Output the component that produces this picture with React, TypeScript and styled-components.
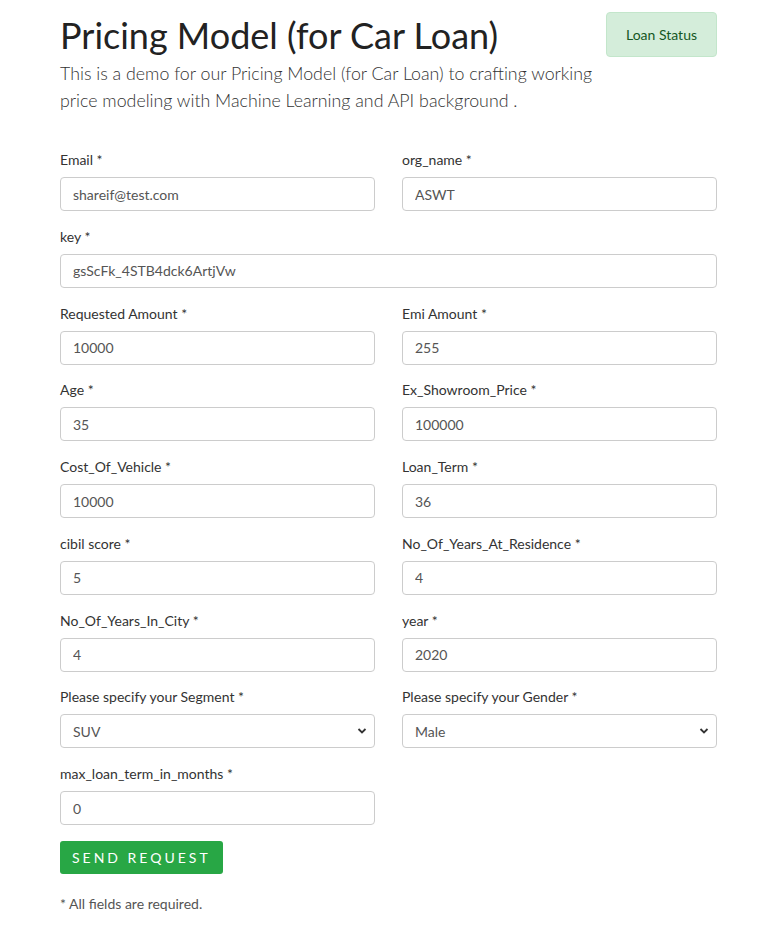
import React from 'react';
import styled, { createGlobalStyle } from 'styled-components';

const GlobalStyle = createGlobalStyle`
  body {
    margin: 0;
    background: #fff;
    font-family: Lato, 'Open Sans', Arial, sans-serif;
    color: #333;
  }
  * { box-sizing: border-box; }
`;

const Page = styled.div`
  width: 657px;
  margin: 0 0 0 60px;
  padding: 11px 0 20px;
`;

const Header = styled.div`
  display: flex;
  align-items: flex-start;
`;

const Intro = styled.div`
  flex: 1;
`;

const Title = styled.h1`
  margin: 0 0 1px;
  font-size: 36px;
  line-height: 48px;
  font-weight: 400;
  color: #222;
`;

const Lead = styled.p`
  margin: 0;
  font-size: 17.8px;
  line-height: 27px;
  font-weight: 300;
  color: #333;
`;

const StatusButton = styled.button`
  flex: none;
  margin-top: 1px;
  width: 111px;
  height: 45px;
  background: #d4edda;
  border: 1px solid #c3e6cb;
  border-radius: 4px;
  color: #155724;
  font-family: inherit;
  font-size: 14px;
`;

const Form = styled.form`
  display: grid;
  grid-template-columns: 315px 315px;
  column-gap: 27px;
  row-gap: 15.75px;
  margin-top: 36px;
`;

const Field = styled.div<{ $wide?: boolean }>`
  display: flex;
  flex-direction: column;
  grid-column: ${p => (p.$wide ? '1 / -1' : 'auto')};
`;

const Label = styled.label`
  font-size: 14px;
  line-height: 20px;
  margin-bottom: 7px;
  color: #333;
`;

const Input = styled.input`
  height: 34px;
  padding: 0 12px;
  border: 1px solid #ccc;
  border-radius: 4px;
  font-family: inherit;
  font-size: 14px;
  color: #555;
  background: #fff;
  outline: none;
`;

const SelectWrap = styled.div`
  position: relative;
`;

const Select = styled.select`
  width: 100%;
  height: 34px;
  padding: 0 12px;
  border: 1px solid #ccc;
  border-radius: 4px;
  font-family: inherit;
  font-size: 14px;
  color: #555;
  background: #fff;
  appearance: none;
  outline: none;
`;

const Chevron = styled.svg`
  position: absolute;
  right: 8px;
  top: 13px;
  pointer-events: none;
`;

const SubmitButton = styled.button`
  justify-self: start;
  grid-column: 1 / -1;
  height: 33px;
  padding: 0 12px;
  background: #28a745;
  border: none;
  border-radius: 3px;
  color: #fff;
  font-family: inherit;
  font-size: 14px;
  letter-spacing: 3px;
`;

const Note = styled.p`
  margin: 21px 0 0;
  font-size: 14px;
  color: #555;
`;

type FieldDef = { label: string; value: string; wide?: boolean; options?: string[] };

const fields: FieldDef[] = [
  { label: 'Email', value: 'shareif@test.com' },
  { label: 'org_name', value: 'ASWT' },
  { label: 'key', value: 'gsScFk_4STB4dck6ArtjVw', wide: true },
  { label: 'Requested Amount', value: '10000' },
  { label: 'Emi Amount', value: '255' },
  { label: 'Age', value: '35' },
  { label: 'Ex_Showroom_Price', value: '100000' },
  { label: 'Cost_Of_Vehicle', value: '10000' },
  { label: 'Loan_Term', value: '36' },
  { label: 'cibil score', value: '5' },
  { label: 'No_Of_Years_At_Residence', value: '4' },
  { label: 'No_Of_Years_In_City', value: '4' },
  { label: 'year', value: '2020' },
  { label: 'Please specify your Segment', value: 'SUV', options: ['SUV', 'Sedan', 'Hatchback'] },
  { label: 'Please specify your Gender', value: 'Male', options: ['Male', 'Female'] },
  { label: 'max_loan_term_in_months', value: '0' },
];

const App: React.FC = () => (
  <>
    <GlobalStyle />
    <Page>
      <Header>
        <Intro>
          <Title>Pricing Model (for Car Loan)</Title>
          <Lead>
            This is a demo for our Pricing Model (for Car Loan) to crafting working price
            modeling with Machine Learning and API background .
          </Lead>
        </Intro>
        <StatusButton type="button">Loan Status</StatusButton>
      </Header>

      <Form onSubmit={e => e.preventDefault()}>
        {fields.map(f => (
          <Field key={f.label} $wide={f.wide}>
            <Label>{f.label} *</Label>
            {f.options ? (
              <SelectWrap>
                <Select defaultValue={f.value}>
                  {f.options.map(o => (
                    <option key={o}>{o}</option>
                  ))}
                </Select>
                <Chevron width="10" height="8" viewBox="0 0 10 8">
                  <path d="M1.5 2 L5 5.5 L8.5 2" fill="none" stroke="#333" strokeWidth="1.8" />
                </Chevron>
              </SelectWrap>
            ) : (
              <Input defaultValue={f.value} />
            )}
          </Field>
        ))}
        <Field />
        <SubmitButton type="submit">SEND REQUEST</SubmitButton>
      </Form>
      <Note>* All fields are required.</Note>
    </Page>
  </>
);

export default App;
